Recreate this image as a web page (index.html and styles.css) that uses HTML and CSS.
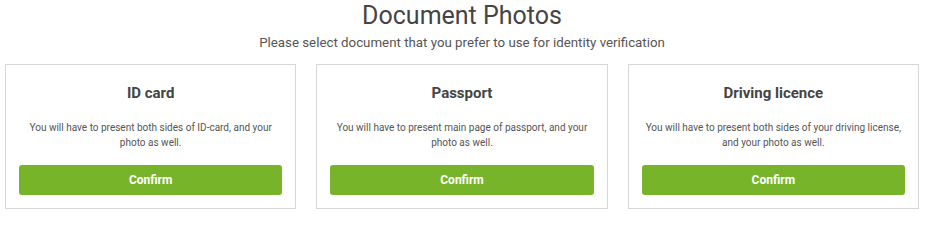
FILE: index.html
```html
<!DOCTYPE html>
<html lang="en">
<head>
<meta charset="utf-8">
<title>Document Photos</title>
<link rel="stylesheet" href="styles.css">
</head>
<body>
<main class="page">
  <header class="head">
    <h1 class="title">Document Photos</h1>
    <p class="subtitle">Please select document that you prefer to use for identity verification</p>
  </header>
  <section class="cards">
    <div class="card">
      <h2 class="card-title">ID card</h2>
      <p class="card-text">You will have to present both sides of ID-card, and your photo as well.</p>
      <button class="btn">Confirm</button>
    </div>
    <div class="card">
      <h2 class="card-title">Passport</h2>
      <p class="card-text">You will have to present main page of passport, and your photo as well.</p>
      <button class="btn">Confirm</button>
    </div>
    <div class="card">
      <h2 class="card-title">Driving licence</h2>
      <p class="card-text">You will have to present both sides of your driving license, and your photo as well.</p>
      <button class="btn">Confirm</button>
    </div>
  </section>
</main>
</body>
</html>
```
FILE: styles.css
```css
* { box-sizing: border-box; }
html, body { margin: 0; padding: 0; background: #fff; }
body { font-family: Roboto, "Liberation Sans", Arial, sans-serif; color: #444; }
.page { width: 927px; padding: 0 8px 0 5px; }
.head { text-align: center; }
.title {
  margin: 0;
  padding-top: 1px;
  font-size: 25px;
  font-weight: 400;
  line-height: 30px;
  color: #444;
}
.subtitle {
  margin: 3px 0 0;
  font-size: 13.3px;
  line-height: 18px;
  color: #555;
}
.cards {
  margin-top: 12px;
  display: grid;
  grid-template-columns: repeat(3, 1fr);
  gap: 20px;
}
.card {
  border: 1px solid #d6d6d6;
  padding: 18px 13px 13px;
  display: flex;
  flex-direction: column;
  align-items: stretch;
  text-align: center;
}
.card-title {
  margin: 0;
  font-size: 15px;
  font-weight: 700;
  line-height: 20px;
  color: #444;
}
.card-text {
  margin: 17px 0 0;
  font-size: 10px;
  line-height: 15px;
  color: #555;
  padding: 0 4px;
}
.btn {
  margin-top: 15px;
  height: 30px;
  border: 0;
  border-radius: 3px;
  background: #78b42a;
  color: #fff;
  font-family: Roboto, "Liberation Sans", Arial, sans-serif;
  font-size: 12px;
  font-weight: 700;
  cursor: pointer;
}
```
